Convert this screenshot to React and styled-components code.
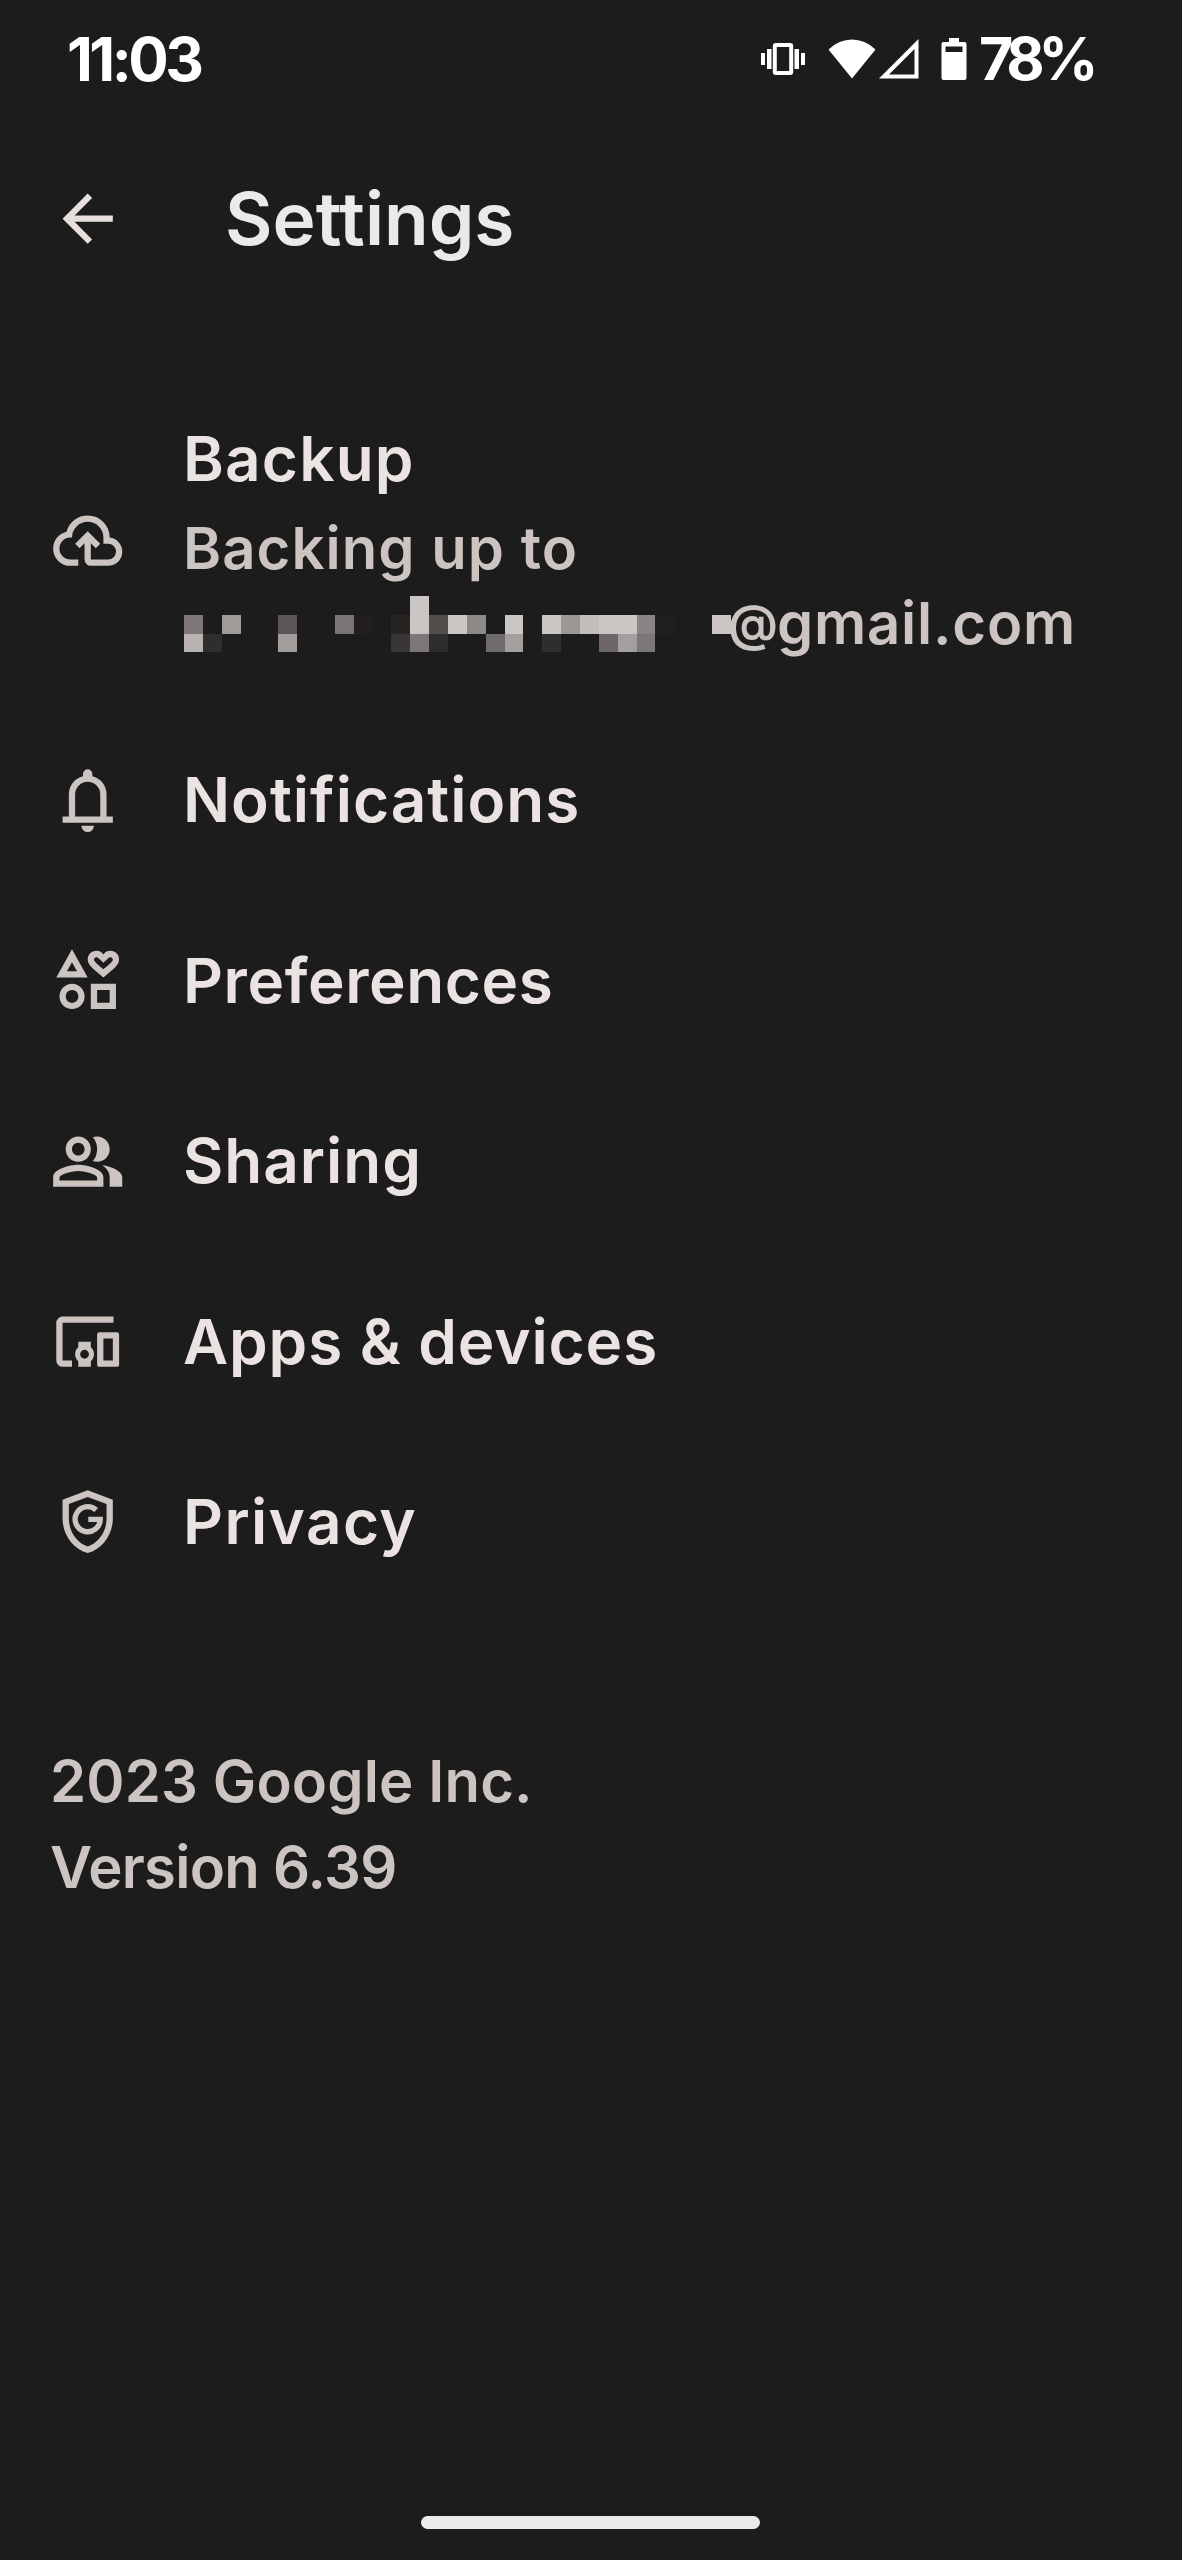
import React from "react";
import styled, { createGlobalStyle } from "styled-components";
import { MdArrowBack, MdOutlineInterests, MdOutlinePeopleAlt } from "react-icons/md";

const BackupIcon = () => (
  <svg viewBox="0 0 24 24" fill="currentColor">
    <path d="M6.5 20q-2.275 0-3.887-1.575T1 14.575q0-1.95 1.175-3.475T5.25 9.15q.625-2.3 2.5-3.725T12 4q2.925 0 4.963 2.038T19 11q1.725.2 2.863 1.488T23 15.5q0 1.875-1.312 3.188T18.5 20H13q-.825 0-1.412-.587T11 18v-5.15L9.4 14.4L8 13l4-4l4 4l-1.4 1.4l-1.6-1.55V18h5.5q1.05 0 1.775-.725T21 15.5t-.725-1.775T18.5 13H17v-2q0-2.075-1.463-3.538T12 6T8.463 7.463T7 11h-.5q-1.45 0-2.475 1.025T3 14.5t1.025 2.475T6.5 18H9v2z" />
  </svg>
);

const BellIcon = () => (
  <svg viewBox="0 0 24 24" fill="currentColor">
    <path d="M4 19v-2h2v-7q0-2.075 1.25-3.688T10.5 4.2v-.7q0-.625.438-1.062T12 2t1.063.438T13.5 3.5v.7q2 .5 3.25 2.113T18 10v7h2v2zm8 3q-.825 0-1.412-.587T10 20h4q0 .825-.587 1.413T12 22m-4-5h8v-7q0-1.65-1.175-2.825T12 6T9.175 7.175T8 10z" />
  </svg>
);

const DevicesIcon = () => (
  <svg viewBox="0 0 24 24" fill="currentColor" fillRule="evenodd">
    <path d="M20.2 4v2H4v12h3v2H4q-.825 0-1.412-.587T2 18V6q0-.825.588-1.412T4 4z" />
    <path d="M9 12h4v1.8q1 .85 1 2.2t-1 2.2V20H9v-1.8Q8 17.35 8 16t1-2.2zM11 14.6a1.4 1.4 0 1 0 0 2.8a1.4 1.4 0 1 0 0-2.8z" />
    <path d="M15.7 9h5.6q.7 0 .7.7v9.6q0 .7-.7.7h-5.6q-.7 0-.7-.7V9.7q0-.7.7-.7zM17 11v7h3v-7z" />
  </svg>
);

const ShieldIcon = () => (
  <svg viewBox="0 0 24 24" fill="currentColor" fillRule="evenodd">
    <path d="M12 2l8 3v6.1c0 5-3.4 9.7-8 10.9c-4.6-1.2-8-5.9-8-10.9V5zM12 4.15L6 6.4v4.7c0 4 2.55 7.7 6 8.8c3.45-1.1 6-4.8 6-8.8V6.4z" />
    <path
      d="M14.7 8.25A4 4 0 1 0 16 11.25H12.2"
      fill="none"
      stroke="currentColor"
      strokeWidth="1.7"
    />
  </svg>
);

const VibrateIcon = () => (
  <svg width="44" height="32" viewBox="0 0 44 32" fill="#fff">
    <rect x="0" y="10" width="4" height="12" />
    <rect x="6" y="6" width="4.5" height="20" />
    <rect x="13.8" y="2" width="16.4" height="28" rx="1" fill="none" stroke="#fff" strokeWidth="4" />
    <rect x="33.5" y="6" width="4.5" height="20" />
    <rect x="40" y="10" width="4" height="12" />
  </svg>
);

const WifiIcon = () => (
  <svg width="48" height="40" viewBox="0 0 48 40" fill="#fff">
    <path d="M24 39.5L.5 10.5Q11 .5 24 .5T47.5 10.5z" />
  </svg>
);

const SignalIcon = () => (
  <svg width="40" height="40" viewBox="0 0 40 40">
    <path d="M39.5 0V39.5H0zM35.5 10L10 35.5H35.5z" fill="#fff" fillRule="evenodd" />
  </svg>
);

const BatteryIcon = () => (
  <svg width="26" height="42" viewBox="0 0 26 42">
    <path
      d="M8 0h10v4h5.5q2 0 2 2v34q0 2-2 2h-21q-2 0-2-2V6q0-2 2-2H8zM4.5 8.5v5.500h17V8.500z"
      fill="#fff"
      fillRule="evenodd"
    />
  </svg>
);

// [column, row, color, rowSpan]
const blocks = [
  [0, 1, "#7d7777"], [0, 2, "#b8b3b0"], [1, 2, "#2e2e2e"], [2, 1, "#a09b98"],
  [5, 1, "#595655"], [5, 2, "#a39e9b"], [8, 1, "#7a7477"], [9, 1, "#201e1f"],
  [11, 1, "#272323"], [11, 2, "#3a3536"], [12, 0, "#cbc6c4", 2], [12, 2, "#7c7676"],
  [13, 1, "#524e4b"], [13, 2, "#2e2d2d"], [14, 1, "#cbc6c4"], [15, 1, "#8e8988"],
  [16, 2, "#6f6a6c"], [17, 1, "#cbc6c4"], [17, 2, "#a39f9b"], [19, 1, "#cbc6c4"],
  [19, 2, "#2e2e2e"], [20, 1, "#9c9795"], [21, 1, "#c2bdba"], [22, 1, "#cbc6c4"],
  [22, 2, "#6c6669"], [23, 1, "#cbc6c4"], [23, 2, "#a39e9f"], [24, 1, "#888385"],
  [24, 2, "#7b7677"], [25, 1, "#201f1f"], [28, 1, "#cbc6c4"],
];

const items = [
  { label: "Notifications", icon: <BellIcon />, spacing: 1.05 },
  { label: "Preferences", icon: <MdOutlineInterests />, spacing: 0.6 },
  { label: "Sharing", icon: <MdOutlinePeopleAlt />, spacing: 1 },
  { label: "Apps & devices", icon: <DevicesIcon />, spacing: 0.9 },
  { label: "Privacy", icon: <ShieldIcon />, spacing: 1.4 },
];

function App() {
  return (
    <Screen>
      <GlobalStyle />
      <StatusBar>
        <Clock>11:03</Clock>
        <StatusIcons>
          <VibrateIcon />
          <Signals>
            <WifiIcon />
            <SignalIcon />
          </Signals>
          <BatteryIcon />
          <Percent>78%</Percent>
        </StatusIcons>
      </StatusBar>

      <Header>
        <IconBox $color="#e6dfdc">
          <MdArrowBack />
        </IconBox>
        <Title>Settings</Title>
      </Header>

      <List>
        <BackupRow>
          <IconBox>
            <BackupIcon />
          </IconBox>
          <BackupText>
            <Label $spacing={1.2}>Backup</Label>
            <Detail $spacing={1.05}>Backing up to</Detail>
            <Account>
              <Mosaic>
                {blocks.map(([col, row, color, span = 1]) => (
                  <Block key={`${col}-${row}`} $col={col} $row={row} $span={span} $color={color} />
                ))}
              </Mosaic>
              <At>@</At>
              <Detail $spacing={0.8}>gmail.com</Detail>
            </Account>
          </BackupText>
        </BackupRow>
        {items.map((item) => (
          <Row key={item.label}>
            <IconBox>{item.icon}</IconBox>
            <Label $spacing={item.spacing}>{item.label}</Label>
          </Row>
        ))}
      </List>

      <Footer>
        <FooterLine $spacing={0.15}>2023 Google Inc.</FooterLine>
        <FooterLine $spacing={-0.7}>Version 6.39</FooterLine>
      </Footer>

      <HomeBar />
    </Screen>
  );
}

export default App;

const GlobalStyle = createGlobalStyle`
  body {
    margin: 0;
    background: #1c1c1c;
  }
`;

const Screen = styled.div`
  display: flex;
  flex-direction: column;
  box-sizing: border-box;
  width: 1182px;
  height: 2560px;
  padding-bottom: 31px;
  background: #1c1c1c;
  font-family: Inter, Roboto, sans-serif;
  font-weight: 600;
  white-space: nowrap;
  overflow: hidden;
`;

const StatusBar = styled.div`
  display: flex;
  align-items: center;
  justify-content: space-between;
  box-sizing: border-box;
  height: 117px;
  padding: 0 86px 0 67px;
  color: #fff;

  svg {
    display: block;
  }
`;

const Clock = styled.div`
  font-size: 60px;
  font-weight: 700;
  letter-spacing: -3.5px;
`;

const StatusIcons = styled.div`
  display: flex;
  align-items: center;
`;

const Signals = styled.div`
  display: flex;
  gap: 3px;
  margin: 1px 22px 0 23px;
`;

const Percent = styled.div`
  width: 117px;
  margin-left: 12px;
  font-size: 59px;
  font-weight: 700;
  letter-spacing: -6.2px;
`;

const Header = styled.div`
  display: flex;
  align-items: center;
  height: 204px;
  padding-left: 50px;
`;

const IconBox = styled.div`
  flex: none;
  width: 75.4px;
  height: 75.4px;
  color: ${(props) => props.$color || "#cbc4c0"};

  > svg {
    display: block;
    width: 100%;
    height: 100%;
  }
`;

const Title = styled.div`
  margin-left: 99.6px;
  padding-bottom: 2px;
  font-size: 73px;
  color: #eaeaea;
`;

const List = styled.div`
  padding: 50px 0 0 50px;
`;

const Row = styled.div`
  display: flex;
  align-items: center;
  gap: 57.6px;
  height: 180.4px;
`;

const BackupRow = styled(Row)`
  height: 339.4px;
`;

const BackupText = styled.div`
  display: flex;
  flex-direction: column;
`;

const Label = styled.div`
  font-size: 62px;
  line-height: 76.4px;
  letter-spacing: ${(props) => props.$spacing}px;
  color: #ebe3e2;

  ${BackupText} & {
    margin-bottom: 14px;
  }
`;

const Detail = styled.div`
  font-size: 58px;
  line-height: 74.5px;
  letter-spacing: ${(props) => props.$spacing}px;
  color: #cbc4c1;
`;

const Account = styled.div`
  display: flex;
  align-items: center;
  height: 74.5px;
`;

const Mosaic = styled.div`
  display: grid;
  grid-template-columns: repeat(29, 18.87px);
  grid-template-rows: repeat(3, 18.87px);
  margin: 2px 0 0 1px;
`;

const Block = styled.div`
  grid-column: ${(props) => props.$col + 1};
  grid-row: ${(props) => props.$row + 1} / span ${(props) => props.$span};
  background: ${(props) => props.$color};
`;

const At = styled.div`
  width: 49px;
  margin-left: -3px;
  font-size: 50px;
  line-height: 74.5px;
  color: #cbc4c1;
`;

const Footer = styled.div`
  margin-top: 126px;
  padding-left: 50px;
`;

const FooterLine = styled(Detail)`
  line-height: 86px;
`;

const HomeBar = styled.div`
  width: 339px;
  height: 13px;
  margin: auto 0 0 421px;
  border-radius: 7px;
  background: #ebebeb;
`;
